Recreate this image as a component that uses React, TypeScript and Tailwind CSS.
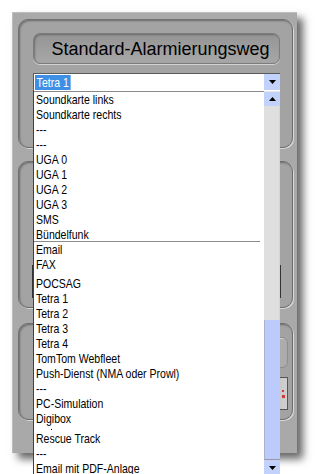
import React from "react";

const items: { t: string; gapBefore?: number; sepAfter?: boolean; dot?: boolean }[] = [
  { t: "Soundkarte links" },
  { t: "Soundkarte rechts" },
  { t: "---" },
  { t: "---" },
  { t: "UGA 0" },
  { t: "UGA 1" },
  { t: "UGA 2" },
  { t: "UGA 3" },
  { t: "SMS" },
  { t: "Bündelfunk", sepAfter: true },
  { t: "Email" },
  { t: "FAX" },
  { t: "POCSAG", gapBefore: 4 },
  { t: "Tetra 1" },
  { t: "Tetra 2" },
  { t: "Tetra 3" },
  { t: "Tetra 4" },
  { t: "TomTom Webfleet" },
  { t: "Push-Dienst (NMA oder Prowl)" },
  { t: "---" },
  { t: "PC-Simulation" },
  { t: "Digibox" },
  { t: "Rescue Track", gapBefore: 5, dot: true },
  { t: "---" },
  { t: "Email mit PDF-Anlage" },
];

function Down() {
  return (
    <svg width="7" height="4" viewBox="0 0 7 4">
      <polygon points="0,0 7,0 3.5,4" fill="#000" />
    </svg>
  );
}
function Up() {
  return (
    <svg width="7" height="4" viewBox="0 0 7 4">
      <polygon points="0,4 7,4 3.5,0" fill="#000" />
    </svg>
  );
}

const narrow = "font-['Liberation_Sans',Arial,sans-serif] text-[13px] inline-block origin-left scale-x-[0.81]";

export default function App() {
  return (
    <div className="w-[318px] h-[474px] bg-white overflow-hidden font-['Liberation_Sans',Arial,sans-serif]">
      <div className="ml-[12px] mt-[12px] w-[285px] h-[441px] bg-[#a9a9a9] shadow-[6px_6px_8px_rgba(0,0,0,0.6)] border-t border-l border-[#bdbdbd] pt-[6px] pl-[5px] pr-[4px] flex flex-col">
        {/* Panel 1 */}
        <div className="h-[129px] rounded-[10px] border border-[#6f6f6f] bg-[#a3a3a3] shadow-[inset_1px_1px_2px_rgba(0,0,0,0.35),1px_1px_0_rgba(255,255,255,0.55)] pt-[13px] pl-[14px] pr-[12px]">
          <div className="h-[31px] w-[247px] rounded-[7px] border border-[#7c7c7c] bg-gradient-to-b from-[#959595] to-[#a7a7a7] shadow-[inset_1px_1px_2px_rgba(0,0,0,0.3),0_1px_0_rgba(255,255,255,0.5)] flex items-center justify-center pl-[8px]">
            <span className="text-[18px] leading-none text-black">Standard-Alarmierungsweg</span>
          </div>
          {/* Combo */}
          <div className="relative mt-[9px] w-[247px] z-10">
            <div className="h-[18px] flex bg-white border-l border-t border-[#5a5a5a]">
              <div className="flex-1 flex items-center pl-[1px]">
                <span className={`${narrow} leading-[15px] h-[15px] px-[2px] bg-[#3e8fe6] text-white`}>Tetra 1</span>
              </div>
              <div className="w-[16px] h-[16px] bg-[#c3d2fc] flex items-center justify-center">
                <Down />
              </div>
            </div>
            {/* Dropdown list */}
            <div className="absolute left-0 top-full w-[247px] h-[390px] flex bg-white border-l border-[#404040]">
              <div className="flex-1 border-t border-[#8a8a8a] flex flex-col">
                {items.map((it, i) => (
                  <React.Fragment key={i}>
                    {it.gapBefore ? (
                      <div className="pl-[17px]" style={{ height: it.gapBefore }}>
                        {it.dot ? <div className="w-px h-px bg-black mt-[3px]" /> : null}
                      </div>
                    ) : null}
                    <div className={`pl-[2px] flex items-center whitespace-nowrap ${it.sepAfter ? "h-[14px]" : "h-[15px]"}`}>
                      <span className={`${narrow} leading-[15px] text-black`}>{it.t}</span>
                    </div>
                    {it.sepAfter ? <div className="h-px w-[226px] bg-[#8c8c8c]" /> : null}
                  </React.Fragment>
                ))}
              </div>
              <div className="w-[16px] flex flex-col">
                <div className="h-[15px] bg-[#c3d2fc] flex items-center justify-center border-t border-[#e8e8e8]">
                  <Up />
                </div>
                <div className="h-[214px] bg-[#dfdfdf] border-r border-[#c9d5fb]" />
                <div className="h-[140px] bg-[#bccbfc] border-l border-[#a9b3cf] border-b border-b-[#9a9a9a]" />
                <div className="h-[16px] bg-[#c3d2fc] flex items-center justify-center">
                  <Down />
                </div>
              </div>
            </div>
          </div>
        </div>
        {/* Panel 2 */}
        <div className="mt-[13px] h-[147px] rounded-[10px] border border-[#6f6f6f] bg-[#a3a3a3] shadow-[inset_1px_1px_2px_rgba(0,0,0,0.35),1px_1px_0_rgba(255,255,255,0.55)] pt-[103px] pl-[13px]">
          <div className="w-[249px] h-[33px] border border-[#333] bg-[#bdbdbd]" />
        </div>
        {/* Panel 3 */}
        <div className="mt-[15px] h-[97px] rounded-[10px] border border-[#6f6f6f] bg-[#a3a3a3] shadow-[inset_1px_1px_2px_rgba(0,0,0,0.35),1px_1px_0_rgba(255,255,255,0.55)] pt-[13px] pr-[4px] flex flex-col items-end">
          <div className="w-[120px] h-[31px] rounded-[6px] border border-[#8c8c8c] bg-[#acacac] shadow-[inset_1px_1px_1px_rgba(255,255,255,0.5)]" />
          <div className="mt-[9px] w-[120px] h-[33px] border border-[#555] bg-gradient-to-r from-[#6a6a6a] to-[#d0d0d0] flex items-center justify-end pr-[2px]">
            <div className="flex flex-col gap-[3px]">
              <div className="w-[2px] h-[2px] bg-[#d23a3a]" />
              <div className="w-[3px] h-[3px] bg-[#d23a3a]" />
            </div>
          </div>
        </div>
      </div>
    </div>
  );
}
